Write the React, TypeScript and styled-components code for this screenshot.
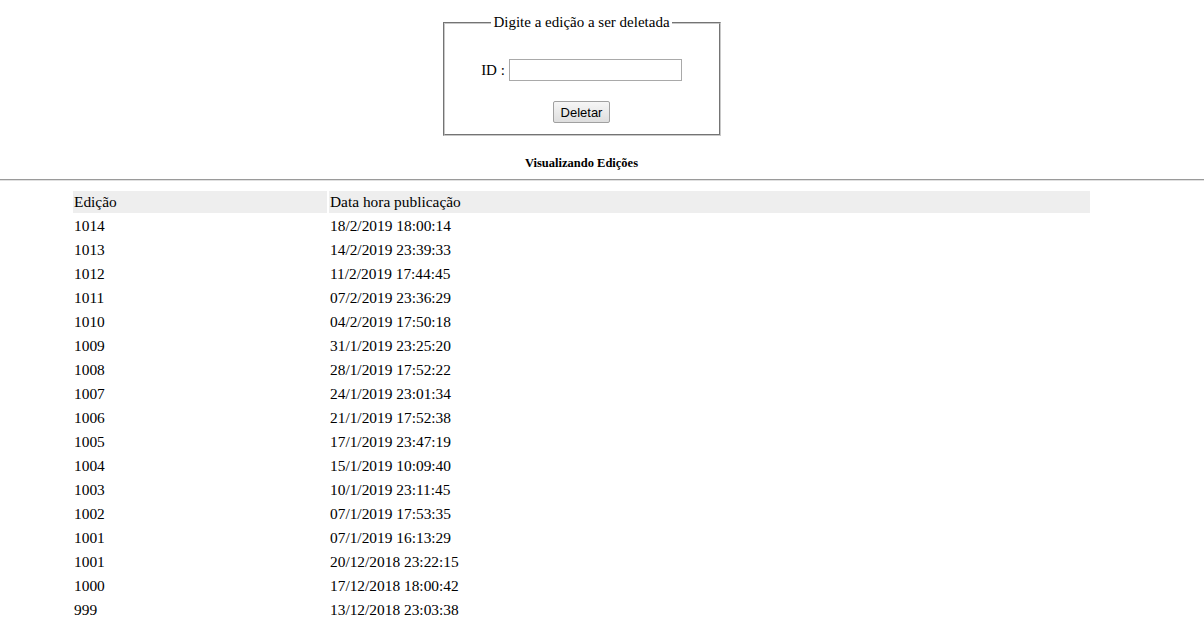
import React from "react";
import styled, { createGlobalStyle } from "styled-components";

const Global = createGlobalStyle`
  html, body { margin: 0; padding: 0; background: #fff; }
  body { font-family: "Liberation Serif", "Times New Roman", serif; color: #000; }
`;

const Content = styled.div`
  width: 1163px;
`;

const Form = styled.form`
  display: flex;
  justify-content: center;
  padding-top: 14px;
`;

const Fieldset = styled.fieldset`
  box-sizing: border-box;
  width: 278px;
  height: 122px;
  margin: 0;
  padding: 0 8px;
  border: 2px groove #c8c8c8;
  display: flex;
  flex-direction: column;
  align-items: center;
`;

const Legend = styled.legend`
  margin: 0 auto;
  padding: 0 2px;
  font-size: 15px;
  line-height: 17px;
`;

const Row = styled.div`
  display: flex;
  align-items: center;
  gap: 4px;
  margin-top: 28px;
  font-size: 15px;
`;

const Input = styled.input`
  box-sizing: border-box;
  width: 173px;
  height: 22px;
  border: 1px solid #a9a9a9;
  padding: 1px 2px;
  font-size: 13px;
`;

const Button = styled.button`
  box-sizing: border-box;
  margin-top: 20px;
  width: 57px;
  height: 22px;
  padding: 0;
  font-family: "Liberation Sans", Arial, sans-serif;
  font-size: 13px;
  color: #000;
  border: 1px solid #a0a0a0;
  border-radius: 2px;
  background: linear-gradient(#f6f6f6, #dedede);
`;

const Title = styled.h5`
  margin: 0;
  padding-top: 18px;
  height: 18px;
  text-align: center;
  font-size: 12.5px;
  line-height: 18px;
  font-weight: bold;
`;

const Rule = styled.hr`
  margin: 7px 0 0;
  border: 0;
  border-top: 1px solid #9a9a9a;
  border-bottom: 1px solid #e0e0e0;
`;

const Table = styled.table`
  width: 1021px;
  margin: 8px auto 0;
  border-spacing: 2px;
  font-size: 15.4px;
`;

const Head = styled.th<{ $w?: string }>`
  background: #eeeeee;
  font-weight: normal;
  text-align: left;
  height: 22px;
  padding: 0 1px;
  width: ${(p) => p.$w || "auto"};
`;

const Cell = styled.td`
  height: 22px;
  padding: 0 1px;
`;

const rows: [string, string][] = [
  ["1014", "18/2/2019 18:00:14"],
  ["1013", "14/2/2019 23:39:33"],
  ["1012", "11/2/2019 17:44:45"],
  ["1011", "07/2/2019 23:36:29"],
  ["1010", "04/2/2019 17:50:18"],
  ["1009", "31/1/2019 23:25:20"],
  ["1008", "28/1/2019 17:52:22"],
  ["1007", "24/1/2019 23:01:34"],
  ["1006", "21/1/2019 17:52:38"],
  ["1005", "17/1/2019 23:47:19"],
  ["1004", "15/1/2019 10:09:40"],
  ["1003", "10/1/2019 23:11:45"],
  ["1002", "07/1/2019 17:53:35"],
  ["1001", "07/1/2019 16:13:29"],
  ["1001", "20/12/2018 23:22:15"],
  ["1000", "17/12/2018 18:00:42"],
  ["999", "13/12/2018 23:03:38"],
];

export default function App() {
  return (
    <>
      <Global />
      <Content>
        <Form onSubmit={(e) => e.preventDefault()}>
          <Fieldset>
            <Legend>Digite a edição a ser deletada</Legend>
            <Row>
              <span>ID :</span>
              <Input type="text" />
            </Row>
            <Button type="submit">Deletar</Button>
          </Fieldset>
        </Form>
        <Title>Visualizando Edições</Title>
      </Content>
      <Rule />
      <Content>
        <Table>
          <thead>
            <tr>
              <Head $w="252px">Edição</Head>
              <Head>Data hora publicação</Head>
            </tr>
          </thead>
          <tbody>
            {rows.map(([id, d], i) => (
              <tr key={i}>
                <Cell>{id}</Cell>
                <Cell>{d}</Cell>
              </tr>
            ))}
          </tbody>
        </Table>
      </Content>
    </>
  );
}
